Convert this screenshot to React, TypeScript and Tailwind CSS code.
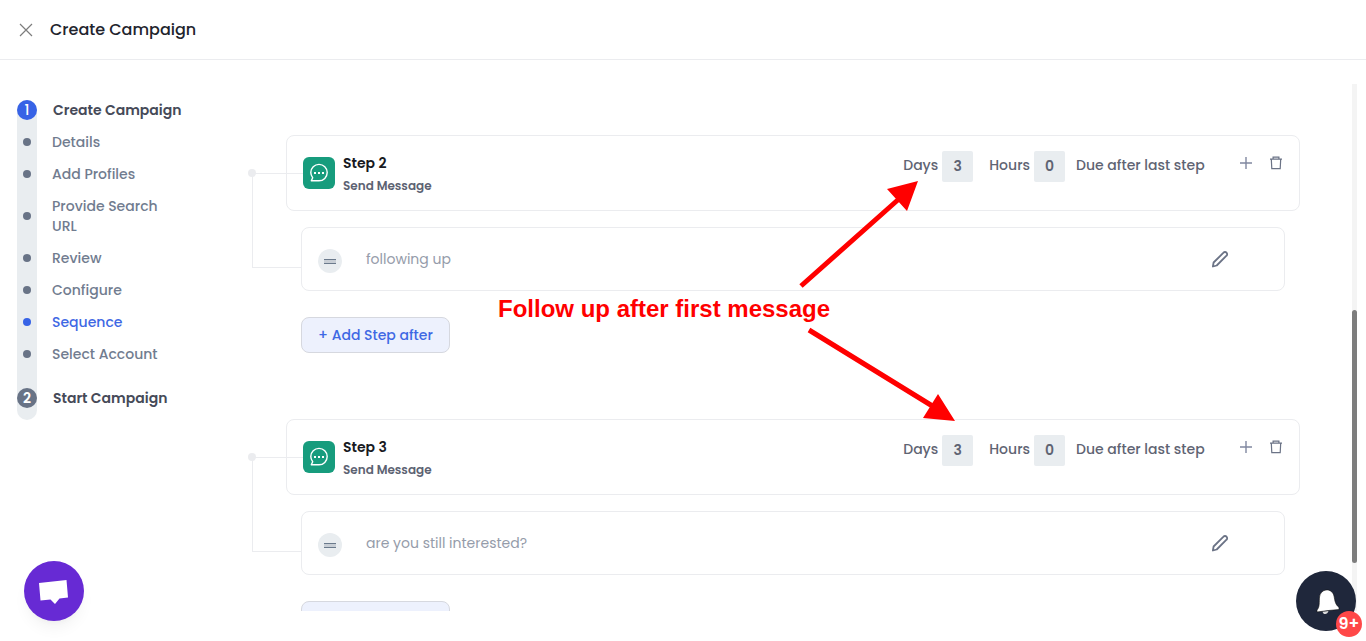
import React, { useState } from 'react';

interface SubStep {
  label: string;
  active?: boolean;
}

interface SequenceStep {
  id: number;
  days: number;
  hours: number;
  message: string;
}

const SUB_STEPS: SubStep[] = [
  { label: 'Details' },
  { label: 'Add Profiles' },
  { label: 'Provide Search URL' },
  { label: 'Review' },
  { label: 'Configure' },
  { label: 'Sequence', active: true },
  { label: 'Select Account' },
];

const STEPS: SequenceStep[] = [
  { id: 2, days: 3, hours: 0, message: 'following up' },
  { id: 3, days: 3, hours: 0, message: 'are you still interested?' },
];

const CloseIcon = () => (
  <svg width="14" height="14" viewBox="0 0 14 14" fill="none" stroke="#7d7d7d" strokeWidth="1.2">
    <path d="M1 1l12 12M13 1L1 13" />
  </svg>
);

const MessageIcon = () => (
  <svg width="20" height="20" viewBox="0 0 20 20" fill="none" stroke="white" strokeWidth="1.4">
    <path d="M2.300 17.800H10a8.200 8.200 0 1 0-8.200-8.200c0 2 .7 3.700 1.900 5.100z" strokeLinejoin="round" />
    <path d="M5 9h2v2H5zM9 9h2v2H9zM13 9h2v2h-2z" fill="white" stroke="none" />
  </svg>
);

const PlusIcon = () => (
  <svg width="14" height="14" viewBox="0 0 14 14" fill="none" stroke="#8088a0" strokeWidth="1.4">
    <path d="M7 1v12M1 7h12" />
  </svg>
);

const TrashIcon = () => (
  <svg width="14" height="14" viewBox="0 0 14 14" fill="none" stroke="#6b7386" strokeWidth="1.2">
    <path d="M1 3.1h12M4.100 3V1.200h5.800V3M2.300 3.100l.5 9.600h8.400l.5-9.600" />
  </svg>
);

const PencilIcon = () => (
  <svg width="18" height="18" viewBox="0 0 18 18" fill="none" stroke="#6b7386" strokeWidth="1.8" strokeLinejoin="round">
    <path d="M1.900 16.500l.7-4L12.500 2.700a2 2 0 0 1 3 0 2 2 0 0 1 0 3L5.700 15.500z" />
  </svg>
);

const Sidebar = () => (
  <nav className="w-[236px] shrink-0 pt-4 pl-[17px] text-sm leading-5">
    <div className="relative w-[168px] pb-3">
      <div className="absolute inset-y-0 left-0 w-5 rounded-full bg-[#e9edf0]" />
      <div className="relative flex items-center gap-4">
        <span className="flex size-5 shrink-0 items-center justify-center rounded-full bg-[#3763e6] font-medium text-white">1</span>
        <span className="font-semibold whitespace-nowrap text-[#464a58]">Create Campaign</span>
      </div>
      <ul className="relative mt-3 mb-6 flex flex-col gap-3">
        {SUB_STEPS.map((step) => (
          <li key={step.label} className="flex items-center gap-[15px]">
            <span className="flex w-5 shrink-0 justify-center">
              <span className={`size-2 rounded-full ${step.active ? 'bg-[#3763e6]' : 'bg-[#687386]'}`} />
            </span>
            <a href="#" className={`max-w-[120px] font-medium ${step.active ? 'text-[#3e68e4]' : 'text-[#717c8f]'}`}>{step.label}</a>
          </li>
        ))}
      </ul>
      <div className="relative flex items-center gap-4">
        <span className="flex size-5 shrink-0 items-center justify-center rounded-full bg-[#687386] font-semibold text-white">2</span>
        <span className="font-semibold whitespace-nowrap text-[#464a58]">Start Campaign</span>
      </div>
    </div>
  </nav>
);

const StepBlock: React.FC<{ step: SequenceStep }> = ({ step }) => {
  const [days, setDays] = useState(String(step.days));
  const [hours, setHours] = useState(String(step.hours));

  return (
    <section className="relative mb-[66px] pl-[34px] text-sm">
      <div className="absolute top-[38px] left-0 h-[95px] w-[49px] border-y border-l border-[#ebecef]" />
      <span className="absolute top-[34px] -left-1 size-2 rounded-full bg-[#ebecef]" />
      <div className="relative flex h-[76px] justify-between rounded-lg border border-[#ebecef] px-4">
        <span className="absolute top-[37px] left-0 w-4 border-t border-[#ebecef]" />
        <div className="flex items-center gap-2">
          <span className="flex size-8 items-center justify-center rounded-md bg-[#179c7d]">
            <MessageIcon />
          </span>
          <div>
            <h3 className="mb-px leading-6 font-semibold text-[#181a22]">Step {step.id}</h3>
            <p className="text-xs leading-5 font-semibold text-[#5c6272]">Send Message</p>
          </div>
        </div>
        <div className="flex items-start pt-[15px] leading-7 font-medium text-[#5f6473]">
          <label className="flex items-start gap-1">
            Days
            <input className="size-[31px] rounded-xs bg-[#e9edf0] text-center font-semibold" value={days} onChange={(e) => setDays(e.target.value)} />
          </label>
          <label className="ml-4 flex items-start gap-1">
            Hours
            <input className="size-[31px] rounded-xs bg-[#e9edf0] text-center font-semibold" value={hours} onChange={(e) => setHours(e.target.value)} />
          </label>
          <span className="ml-[11px] w-[131px]">Due after last step</span>
          <button aria-label="Add step" className="mt-[5px] ml-8"><PlusIcon /></button>
          <button aria-label="Delete step" className="mt-[5px] ml-4"><TrashIcon /></button>
        </div>
      </div>
      <div className="mx-[15px] mt-4 flex h-16 items-center rounded-lg border border-[#ebecef] pr-[55px] pl-4">
        <span className="mt-1 flex size-6 items-center justify-center rounded-full bg-[#e9edf0]">
          <span className="h-[5px] w-3 border-y border-[#6b7a8c] bg-[#c8ced5]" />
        </span>
        <p className="ml-6 flex-1 text-[#959caa]">{step.message}</p>
        <button aria-label="Edit message"><PencilIcon /></button>
      </div>
      <button className="mt-[26px] ml-[15px] h-9 rounded-lg border border-[#d6d8df] bg-[#edf1fd] px-4 font-medium text-[#3e68e4]">
        + Add Step after
      </button>
    </section>
  );
};

const Annotation = () => (
  <div className="pointer-events-none absolute top-[180px] left-[498px] h-[244px] w-[460px] text-[#ff0000]">
    <svg className="absolute inset-0" width="460" height="244" viewBox="498 180 460 244" fill="none">
      <path d="M801 286L900 198M809 330L934 407" stroke="currentColor" strokeWidth="5" />
      <path d="M918 181L887 189L907 211zM955 421L938 394L923 418z" fill="currentColor" />
    </svg>
    <p className="absolute top-[113px] left-0 font-['Liberation_Sans',sans-serif] text-2xl font-bold whitespace-nowrap">
      Follow up after first message
    </p>
  </div>
);

const App: React.FC = () => {
  return (
    <div className="relative flex h-screen flex-col overflow-hidden bg-white font-[Poppins,Inter,sans-serif]">
      <header className="flex h-[60px] shrink-0 items-center gap-[17px] border-b border-[#ebecef] px-[19px]">
        <button aria-label="Close"><CloseIcon /></button>
        <h1 className="text-base font-medium text-[#22242d]">Create Campaign</h1>
      </header>

      <div className="mt-6 mb-[30px] flex min-h-0 flex-1">
        <Sidebar />
        <main className="min-w-0 flex-1 overflow-hidden pt-[51px] pr-[52px] pl-4">
          {STEPS.map((step) => <StepBlock key={step.id} step={step} />)}
        </main>
        <div className="mr-[9px] w-[5px] shrink-0 bg-[#f4f4f4] pt-[226px]">
          <div className="h-[253px] rounded-full bg-[#7d7d7d]" />
        </div>
      </div>

      <Annotation />

      <button aria-label="Open chat" className="absolute bottom-5 left-6 size-[60px] rounded-full bg-[#672ad4] shadow-lg shadow-black/5">
        <svg width="60" height="60" viewBox="0 0 60 60" fill="white">
          <path d="M15 22L42.500 19L44 36.500L35.500 37.500L31 43L26.500 38.500L16.500 39.500z" />
        </svg>
      </button>

      <button aria-label="Notifications" className="absolute right-[10px] bottom-[10px] size-[60px] rounded-full bg-[#1f273b]">
        <svg width="60" height="60" viewBox="0 0 60 60">
          <path d="M26.500 40.500c.5 3.500 5 3.500 6-.5z" fill="#ddd" />
          <path d="M21 41v-2C24 36 23 31 23.500 26c.5-4 3-6.500 6.500-7 4-.5 7 2 8 6 1 5 1 8 5 11.500v2c-7 .5-15 1.500-22 2.500z" fill="white" stroke="#111" strokeWidth=".6" />
        </svg>
        <span className="absolute -right-[6px] -bottom-[6px] flex size-[26px] items-center justify-center rounded-full bg-[#ff4848] text-base font-semibold text-white">9+</span>
      </button>
    </div>
  );
};

export default App;
